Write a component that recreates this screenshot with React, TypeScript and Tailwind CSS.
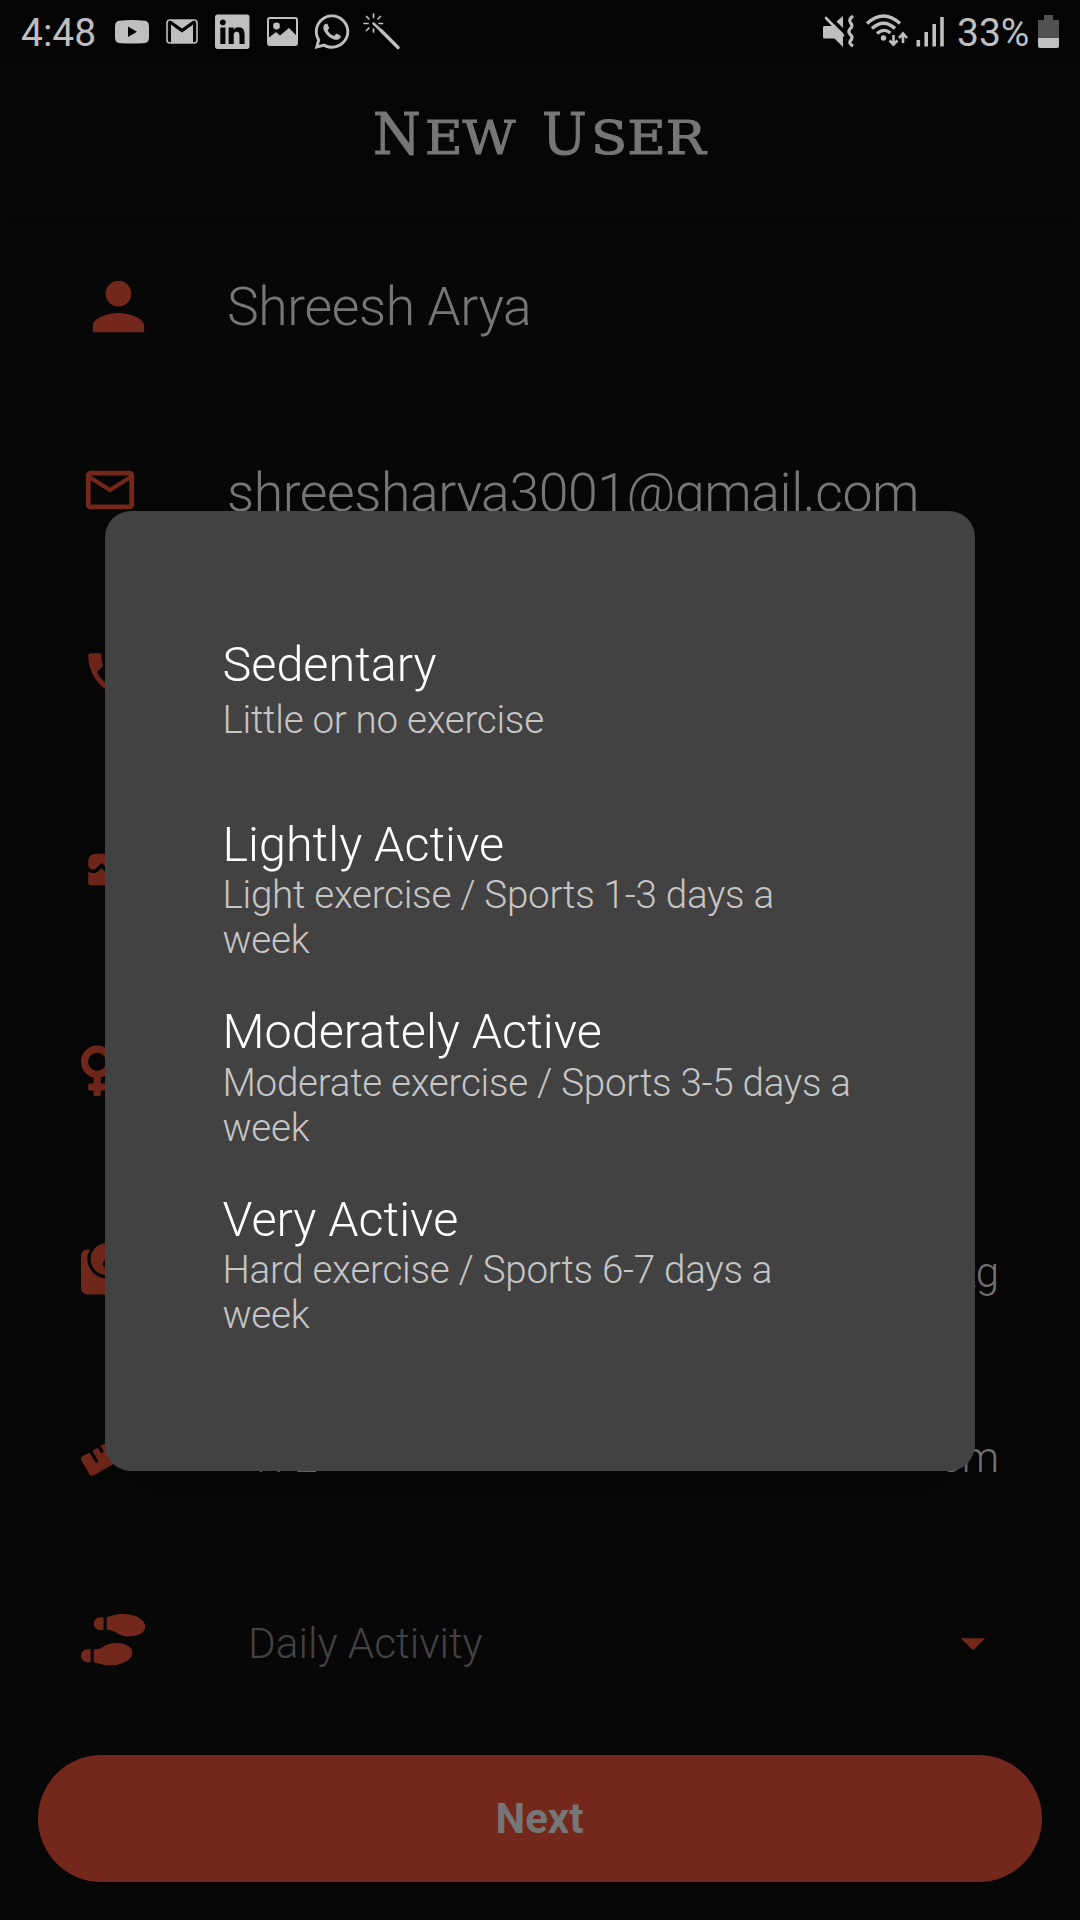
import type { ReactNode } from "react";
import { MdPerson, MdMailOutline, MdPhone, MdCake, MdArrowDropDown } from "react-icons/md";
import { FaVenus, FaWeight, FaRuler, FaShoePrints, FaWhatsapp, FaLinkedin } from "react-icons/fa";

function StatusBar() {
  return (
    <div className="flex h-[63px] items-start bg-[#040404] pl-[21px] pr-[21px] text-[#bfbfbf]">
      <span className="mt-[10px] w-[94px] text-[39px] leading-[46px]">4:48</span>
      <svg className="mt-5 h-[24px] w-[34px]" viewBox="0 0 34 24">
        <path fill="currentColor" d="M4 .8Q17-.6 30 .8Q33.4 1.2 33.8 5Q34.4 12 33.8 19Q33.4 22.6 30 23Q17 24.2 4 23Q.6 22.6.2 19Q-.4 12 .2 5Q.6 1.2 4 .8Z" />
        <path fill="#040404" d="M13 6.5v10.5l9-5.2z" />
      </svg>
      <svg className="ml-[17px] mt-[19px] h-[25px] w-[32px]" viewBox="0 0 32 25">
        <rect x="1" y="1" width="30" height="23" rx="3" fill="#040404" stroke="currentColor" strokeWidth="1.6" />
        <path fill="currentColor" d="M5 24V5.5L16 13.5L27 5.500V24z" />
        <path fill="none" stroke="#040404" strokeWidth="2" d="M4 23V3.500L16 12L28 3.500V23" />
        <path fill="currentColor" d="M4 1h24L16 9.500z" />
      </svg>
      <FaLinkedin className="ml-[17px] mt-[12px] h-[39.500px] w-[34.500px]" />
      <svg className="ml-[17px] mt-[17px] h-[29px] w-[31px]" viewBox="0 0 31 29">
        <rect x="1" y="1" width="29" height="27" rx="2" fill="none" stroke="currentColor" strokeWidth="2" />
        <circle cx="9.500" cy="9" r="3.400" fill="currentColor" />
        <path fill="currentColor" d="M2 20.500L9 15l4 3.500L22 11l7 7v9H2z" />
      </svg>
      <FaWhatsapp className="ml-[16px] mt-[12px] h-[39.500px] w-[36px]" />
      <svg className="ml-[13px] mt-[13px] h-[37px] w-[38px]" viewBox="0 0 38 37" fill="none" stroke="currentColor" strokeLinecap="round">
        <path strokeWidth="1.700" d="M1 10.500h4M16 10.500h3.500M10.500 1v3.500M10.500 16v3M3.500 3.500l2.500 2.500M17.500 3.500l-2.500 2.500M3.500 17.500l2.500-2.500" />
        <path strokeWidth="2.400" d="M10.500 10.500L26 25" />
        <path strokeWidth="3.400" d="M18 17.500L35 34.500" />
      </svg>
      <div className="flex-1" />
      <svg className="mt-[14px] h-[34px] w-[32px]" viewBox="0 0 32 34">
        <path fill="currentColor" d="M1 12h8l2-1.800L20 19v14l-8.500-8.500H1Q0 24.500 0 22.500V13.500Q0 12 1 12zM20 2v12l-6.500-6.500z" />
        <path stroke="currentColor" strokeWidth="2.600" strokeLinecap="round" d="M3 4l17 17.500" />
        <path stroke="currentColor" strokeWidth="3.200" fill="none" d="M30 2q-5 3.800-2.500 6.800q3 3-.2 5.700q-2.800 3.400.2 6.200q3 3 0 5.800q-2 3 2.500 5.700" />
      </svg>
      <svg className="ml-[11px] mt-[14px] h-[33px] w-[42px]" viewBox="0 0 42 33" fill="none" stroke="currentColor">
        <path strokeWidth="3.300" d="M1 9.500Q17.500-5.500 34 9.500M6 14.500Q17.500 4 29 14.500M11 19.500Q17.500 13.500 24.500 19" />
        <circle cx="17.500" cy="24" r="2.700" fill="currentColor" stroke="none" />
        <path strokeWidth="2.600" d="M27.500 21v9M23.500 26.500l4 4.200l4-4.200M37 29V20M33 24l4-4.500l4 4.500" />
      </svg>
      <svg className="ml-[8px] mt-4 h-[31px] w-[29px]" viewBox="0 0 29 31" stroke="currentColor" strokeWidth="3.600">
        <path d="M2.300 24v6.500M10.200 16v14.500M18.200 8v22.500M26 1v29.500" />
      </svg>
      <span className="ml-[12px] mt-[10px] w-[81px] whitespace-nowrap text-[39px] leading-[46px]">33%</span>
      <svg className="mt-[15px] h-[33px] w-[21px]" viewBox="0 0 21 33">
        <path fill="#515151" d="M6 0h9v5h6v18H0V5h6z" />
        <path fill="currentColor" d="M0 23h21v8q0 2-2 2H2q-2 0-2-2z" />
      </svg>
    </div>
  );
}

function Header() {
  return (
    <header className="h-[154px] bg-[#060606] pt-[29px] shadow-[0_1px_3px_#050505]">
      <h1 className="ml-[373px] flex items-baseline whitespace-nowrap font-['DejaVu_Serif'] text-[#767676] [-webkit-text-stroke:1px_#767676]">
        <span className="w-[52px] origin-left scale-x-[0.96] text-[57px] leading-[70px]">N</span>
        <span className="w-[117px] origin-left scale-x-[1.12] text-[46px]">EW</span>
        <span className="w-[49px] origin-left scale-x-[0.93] text-[57px]">U</span>
        <span className="origin-left scale-x-[1.150] text-[46px]">SER</span>
      </h1>
    </header>
  );
}

function Row({ className, icon, children }: { className: string; icon: ReactNode; children?: ReactNode }) {
  return (
    <div className={`flex items-center pl-[81px] pr-[81px] ${className}`}>
      <div className="w-[147px] shrink-0 text-[#73281b]">{icon}</div>
      {children}
    </div>
  );
}

const activities = [
  { title: "Sedentary", detail: "Little or no exercise", box: "h-[180px]", gap: "mt-[5px]", shift: "" },
  { title: "Lightly Active", detail: "Light exercise / Sports 1-3 days a week", box: "h-[187.500px]", gap: "mt-0", shift: "" },
  { title: "Moderately Active", detail: "Moderate exercise / Sports 3-5 days a week", box: "h-[187.500px]", gap: "mt-0", shift: "-mt-px mb-px" },
  { title: "Very Active", detail: "Hard exercise / Sports 6-7 days a week", box: "h-[187.500px]", gap: "mt-0", shift: "" },
];

function ActivityDialog() {
  return (
    <div role="dialog" className="absolute left-[105px] top-[511px] h-[960px] w-[870px] rounded-[26px] bg-[#424242] pl-[117.500px] pt-[126px] shadow-[0_40px_40px_-4px_rgba(0,0,0,0.18)]">
      {activities.map((a) => (
        <div key={a.title} className={`flex w-[645px] flex-col ${a.box}`}>
          <p className={`text-[48.550px] font-light leading-[55px] text-white ${a.shift}`}>{a.title}</p>
          <p className={`text-[38.570px] font-light leading-[45px] tracking-[-0.27px] text-[#c6c6c6] ${a.gap}`}>{a.detail}</p>
        </div>
      ))}
    </div>
  );
}

export default function App() {
  return (
    <div className="relative h-[1920px] w-[1080px] overflow-hidden bg-[#070707] font-[Roboto,sans-serif]">
      <StatusBar />
      <Header />
      <main className="font-light text-[#767676]">
        <Row className="h-[179px]" icon={<MdPerson className="-ml-px h-[77px] w-[77px]" />}>
          <span className="-ml-px mt-[2px] text-[53.500px] tracking-[-0.4px]">Shreesh Arya</span>
        </Row>
        <Row className="h-[188px]" icon={<MdMailOutline className="h-[58px] w-[58px]" />}>
          <span className="-ml-px mt-[6px] text-[53.500px] tracking-[-0.4px]">shreesharya3001@gmail.com</span>
        </Row>
        <Row className="h-[182px]" icon={<MdPhone className="h-[58px] w-[58px]" />} />
        <Row className="h-[190px]" icon={<MdCake className="h-[58px] w-[58px]" />} />
        <Row className="h-[230px]" icon={<FaVenus className="h-[57.600px] w-[32.400px]" />} />
        <Row className="h-[166px]" icon={<FaWeight className="h-[51.400px] w-[51.400px]" />}>
          <span className="ml-auto mt-[6px] text-[42px]">kg</span>
        </Row>
        <Row className="h-[200px]" icon={<FaRuler className="h-[51.400px] w-[64.300px]" />}>
          <span className="ml-[20px] mt-[10px] text-[42px]">172</span>
          <span className="ml-auto mt-[11px] text-[42px]">cm</span>
        </Row>
        <Row className="h-[175px]" icon={<FaShoePrints className="h-[51.400px] w-[64.300px]" />}>
          <span className="ml-[20px] mt-[8px] text-[42.300px] text-[#424242]">Daily Activity</span>
          <MdArrowDropDown className="-mr-[3px] ml-auto mt-[7px] h-[58px] w-[58px] text-[#73281b]" />
        </Row>
      </main>
      <button className="ml-[38px] mt-[28px] block h-[127px] w-[1004px] rounded-full bg-[#73281b] pr-px text-[42px] font-bold text-[#767676]">
        Next
      </button>
      <ActivityDialog />
    </div>
  );
}
